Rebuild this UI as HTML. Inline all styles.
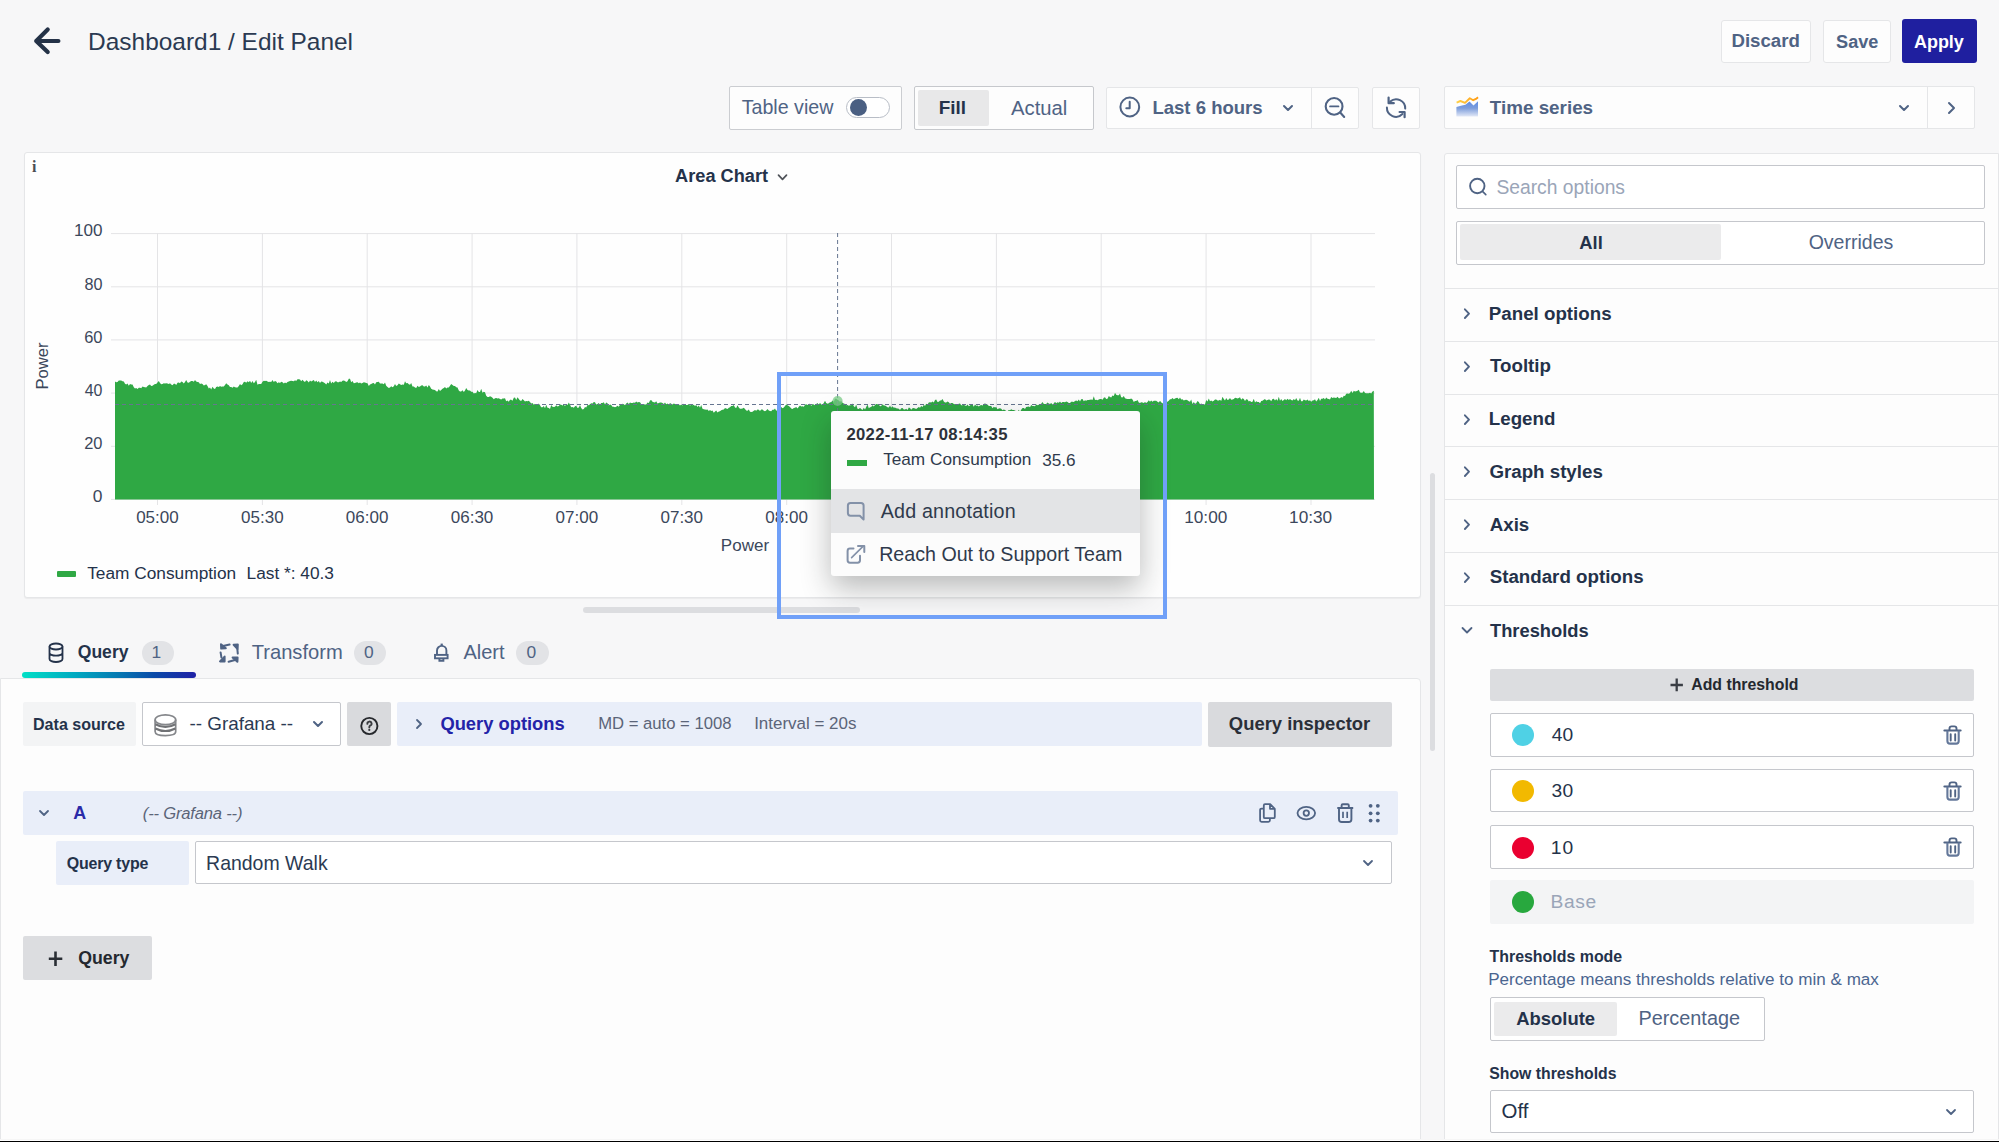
<!DOCTYPE html>
<html><head><meta charset="utf-8"><title>Edit Panel</title>
<style>
html,body{margin:0;padding:0;width:1999px;height:1142px;overflow:hidden;background:#f7f7f8;font-family:"Liberation Sans",sans-serif}
</style></head><body>
<svg style="position:absolute;left:30px;top:24px;" width="36" height="36" viewBox="0 0 36 36"><path d="M6.2 17 H28.4 M17.7 5.6 L6.2 17 L17.7 28" fill="none" stroke="#243247" stroke-width="4.2" stroke-linecap="round" stroke-linejoin="round"/></svg>
<div style="position:absolute;left:88.09px;top:30.22px;font:normal 400 24.45px/24.45px 'Liberation Sans';letter-spacing:0.000px;color:#2b3a52;white-space:pre">Dashboard1 / Edit Panel</div>
<div style="position:absolute;left:1720.5px;top:19.5px;width:90.0px;height:43.0px;box-sizing:border-box;background:#fdfdfd;border:1px solid #e5e6e8;border-radius:3px"></div>
<div style="position:absolute;left:1731.43px;top:32.24px;font:normal 700 18.66px/18.66px 'Liberation Sans';letter-spacing:0.000px;color:#4f6384;white-space:pre">Discard</div>
<div style="position:absolute;left:1823px;top:19.5px;width:67.5px;height:43.0px;box-sizing:border-box;background:#fdfdfd;border:1px solid #e5e6e8;border-radius:3px"></div>
<div style="position:absolute;left:1836.12px;top:32.69px;font:normal 700 18.13px/18.13px 'Liberation Sans';letter-spacing:0.000px;color:#4f6384;white-space:pre">Save</div>
<div style="position:absolute;left:1901.5px;top:19px;width:75.0px;height:44px;box-sizing:border-box;background:#1f1f9f;border-radius:3px"></div>
<div style="position:absolute;left:1913.92px;top:32.81px;font:normal 700 17.99px/17.99px 'Liberation Sans';letter-spacing:0.000px;color:#ffffff;white-space:pre">Apply</div>
<div style="position:absolute;left:729px;top:86.3px;width:173px;height:43.7px;box-sizing:border-box;background:#fdfdfd;border:1px solid #cbcdd1;border-radius:2px"></div>
<div style="position:absolute;left:741.69px;top:98.09px;font:normal 400 19.65px/19.65px 'Liberation Sans';letter-spacing:0.000px;color:#4f6384;white-space:pre">Table view</div>
<div style="position:absolute;left:845.5px;top:96.7px;width:44.5px;height:21.599999999999994px;box-sizing:border-box;background:#fff;border:1.5px solid #b8bdc6;border-radius:11px"></div>
<div style="position:absolute;left:849.5px;top:99px;width:17px;height:17px;border-radius:50%;background:#4a5f82"></div>
<div style="position:absolute;left:914px;top:86.3px;width:179.5999999999999px;height:43.7px;box-sizing:border-box;background:#fdfdfd;border:1px solid #c6c8cc;border-radius:2px"></div>
<div style="position:absolute;left:917.7px;top:89.9px;width:70.89999999999998px;height:35.69999999999999px;box-sizing:border-box;background:#e8e8e9;border-radius:2px"></div>
<div style="position:absolute;left:938.82px;top:98.74px;font:normal 700 18.90px/18.90px 'Liberation Sans';letter-spacing:-0.000px;color:#24324a;white-space:pre">Fill</div>
<div style="position:absolute;left:1011.00px;top:97.57px;font:normal 400 20.27px/20.27px 'Liberation Sans';letter-spacing:0.000px;color:#4f6384;white-space:pre">Actual</div>
<div style="position:absolute;left:1105.6px;top:86.8px;width:253.80000000000018px;height:42.500000000000014px;box-sizing:border-box;background:#fdfdfd;border:1px solid #e5e6e8;border-radius:2px"></div>
<div style="position:absolute;left:1310.5px;top:86.8px;width:1.0px;height:42.500000000000014px;box-sizing:border-box;background:#e5e6e8"></div>
<svg style="position:absolute;left:1117px;top:94px;" width="26" height="26" viewBox="0 0 26 26"><circle cx="12.8" cy="13" r="9.4" fill="none" stroke="#4f6384" stroke-width="2"/><path d="M12.7 7.8 V14.2 H9.3" fill="none" stroke="#4f6384" stroke-width="2" stroke-linecap="round" stroke-linejoin="round"/></svg>
<div style="position:absolute;left:1152.44px;top:99.03px;font:normal 700 18.55px/18.55px 'Liberation Sans';letter-spacing:0.000px;color:#4f6384;white-space:pre">Last 6 hours</div>
<svg style="position:absolute;left:1280px;top:100px;" width="16" height="16" viewBox="0 0 16 16"><path d="M4 6 L8 10 L12 6" fill="none" stroke="#4f6384" stroke-width="2" stroke-linecap="round" stroke-linejoin="round"/></svg>
<svg style="position:absolute;left:1321px;top:93px;" width="28" height="28" viewBox="0 0 28 28"><circle cx="13.1" cy="13.4" r="8.4" fill="none" stroke="#4f6384" stroke-width="2.1"/><path d="M9 13.4 H17.5" fill="none" stroke="#4f6384" stroke-width="1.7" stroke-linecap="round"/><path d="M19.2 19.5 L23.2 24" fill="none" stroke="#4f6384" stroke-width="2.1" stroke-linecap="round"/></svg>
<div style="position:absolute;left:1372px;top:86.8px;width:48.200000000000045px;height:42.500000000000014px;box-sizing:border-box;background:#fdfdfd;border:1px solid #e5e6e8;border-radius:2px"></div>
<svg style="position:absolute;left:1382px;top:93px;" width="28" height="28" viewBox="0 0 28 28"><path d="M8.2 8.6 A9 9 0 0 1 23.2 15.6 M4.9 14.6 A9 9 0 0 0 20.4 21" fill="none" stroke="#4f6384" stroke-width="2" stroke-linecap="round"/><path d="M6.6 4.6 V10.2 H11.8 M22.6 24.2 V19 H17.6" fill="none" stroke="#4f6384" stroke-width="2.2" stroke-linecap="round" stroke-linejoin="round"/></svg>
<div style="position:absolute;left:1444.2px;top:86.1px;width:531.3px;height:43.099999999999994px;box-sizing:border-box;background:#fdfdfd;border:1px solid #e5e6e8;border-radius:2px"></div>
<div style="position:absolute;left:1926.5px;top:86.1px;width:1.0px;height:43.099999999999994px;box-sizing:border-box;background:#e5e6e8"></div>
<svg style="position:absolute;left:1456px;top:95px;" width="24" height="23" viewBox="0 0 24 23"><defs><linearGradient id="tsg" x1="0" y1="0" x2="0" y2="1"><stop offset="0" stop-color="#5f8de6"/><stop offset="0.45" stop-color="#7d9ddb"/><stop offset="1" stop-color="#e3e9f7"/></linearGradient><linearGradient id="tso" x1="0" y1="0" x2="1" y2="0"><stop offset="0" stop-color="#ffd24a"/><stop offset="1" stop-color="#ff9a10"/></linearGradient></defs><path d="M0.4 12 L4 11 L6 10.5 L9.4 9.8 L13.5 6.6 L17.5 10.4 L22 6.2 V21.6 H0.4 Z" fill="url(#tsg)"/><path d="M0.6 7.6 L4.4 6 L9 7.9 L13.8 3.2 L17.2 5.2 L20.5 3.6 L22 2.2" fill="none" stroke="url(#tso)" stroke-width="1.9" stroke-linejoin="round"/></svg>
<div style="position:absolute;left:1489.80px;top:98.68px;font:normal 700 18.84px/18.84px 'Liberation Sans';letter-spacing:0.000px;color:#4f6384;white-space:pre">Time series</div>
<svg style="position:absolute;left:1896px;top:100px;" width="16" height="16" viewBox="0 0 16 16"><path d="M4 6 L8 10 L12 6" fill="none" stroke="#4f6384" stroke-width="2" stroke-linecap="round" stroke-linejoin="round"/></svg>
<svg style="position:absolute;left:1943px;top:99px;" width="16" height="18" viewBox="0 0 16 18"><path d="M6 4 L11 9 L6 14" fill="none" stroke="#4f6384" stroke-width="2" stroke-linecap="round" stroke-linejoin="round"/></svg>
<div style="position:absolute;left:23.5px;top:152.3px;width:1397.0px;height:445.99999999999994px;box-sizing:border-box;background:#fefefe;border:1px solid #e5e6e8;border-radius:3px;box-shadow:0 1px 1px rgba(0,0,0,0.05)"></div>
<div style="position:absolute;left:32px;top:158.5px;font:700 16px/16px 'Liberation Serif';color:#4a4d52">i</div>
<div style="position:absolute;left:675.12px;top:167.34px;font:normal 700 18.18px/18.18px 'Liberation Sans';letter-spacing:0.000px;color:#24324a;white-space:pre">Area Chart</div>
<svg style="position:absolute;left:774px;top:170px;" width="16" height="14" viewBox="0 0 16 14"><path d="M4.5 5.2 L8.5 9.4 L12.5 5.2" fill="none" stroke="#4f5359" stroke-width="1.7" stroke-linecap="round" stroke-linejoin="round"/></svg>
<svg style="position:absolute;left:0;top:0" width="1999" height="1142"><line x1="111" y1="233.6" x2="1375" y2="233.6" stroke="#e4e4e6" stroke-width="1"/><line x1="111" y1="286.8" x2="1375" y2="286.8" stroke="#e4e4e6" stroke-width="1"/><line x1="111" y1="339.9" x2="1375" y2="339.9" stroke="#e4e4e6" stroke-width="1"/><line x1="111" y1="393.1" x2="1375" y2="393.1" stroke="#e4e4e6" stroke-width="1"/><line x1="111" y1="446.3" x2="1375" y2="446.3" stroke="#e4e4e6" stroke-width="1"/><line x1="111" y1="499.4" x2="1375" y2="499.4" stroke="#e4e4e6" stroke-width="1"/><line x1="157.5" y1="233" x2="157.5" y2="505" stroke="#e4e4e6" stroke-width="1"/><line x1="262.4" y1="233" x2="262.4" y2="505" stroke="#e4e4e6" stroke-width="1"/><line x1="367.2" y1="233" x2="367.2" y2="505" stroke="#e4e4e6" stroke-width="1"/><line x1="472.1" y1="233" x2="472.1" y2="505" stroke="#e4e4e6" stroke-width="1"/><line x1="576.9" y1="233" x2="576.9" y2="505" stroke="#e4e4e6" stroke-width="1"/><line x1="681.8" y1="233" x2="681.8" y2="505" stroke="#e4e4e6" stroke-width="1"/><line x1="786.7" y1="233" x2="786.7" y2="505" stroke="#e4e4e6" stroke-width="1"/><line x1="891.5" y1="233" x2="891.5" y2="505" stroke="#e4e4e6" stroke-width="1"/><line x1="996.4" y1="233" x2="996.4" y2="505" stroke="#e4e4e6" stroke-width="1"/><line x1="1101.2" y1="233" x2="1101.2" y2="505" stroke="#e4e4e6" stroke-width="1"/><line x1="1206.1" y1="233" x2="1206.1" y2="505" stroke="#e4e4e6" stroke-width="1"/><line x1="1311.0" y1="233" x2="1311.0" y2="505" stroke="#e4e4e6" stroke-width="1"/></svg>
<div style="position:absolute;left:73.93px;top:222.18px;font:normal 400 17.08px/17.08px 'Liberation Sans';letter-spacing:0.000px;color:#3b475b;white-space:pre">100</div>
<div style="position:absolute;left:84.39px;top:276.14px;font:normal 400 16.19px/16.19px 'Liberation Sans';letter-spacing:0.000px;color:#3b475b;white-space:pre">80</div>
<div style="position:absolute;left:84.13px;top:329.03px;font:normal 400 16.43px/16.43px 'Liberation Sans';letter-spacing:0.000px;color:#3b475b;white-space:pre">60</div>
<div style="position:absolute;left:84.65px;top:382.64px;font:normal 400 15.95px/15.95px 'Liberation Sans';letter-spacing:0.000px;color:#3b475b;white-space:pre">40</div>
<div style="position:absolute;left:84.13px;top:435.43px;font:normal 400 16.43px/16.43px 'Liberation Sans';letter-spacing:0.000px;color:#3b475b;white-space:pre">20</div>
<div style="position:absolute;left:92.76px;top:487.71px;font:normal 400 17.40px/17.40px 'Liberation Sans';letter-spacing:0.000px;color:#3b475b;white-space:pre">0</div>
<div style="position:absolute;left:136.17px;top:509.35px;font:normal 400 17.01px/17.01px 'Liberation Sans';letter-spacing:0.000px;color:#3b475b;white-space:pre">05:00</div>
<div style="position:absolute;left:241.07px;top:509.35px;font:normal 400 17.01px/17.01px 'Liberation Sans';letter-spacing:0.000px;color:#3b475b;white-space:pre">05:30</div>
<div style="position:absolute;left:345.87px;top:509.35px;font:normal 400 17.01px/17.01px 'Liberation Sans';letter-spacing:0.000px;color:#3b475b;white-space:pre">06:00</div>
<div style="position:absolute;left:450.77px;top:509.35px;font:normal 400 17.01px/17.01px 'Liberation Sans';letter-spacing:0.000px;color:#3b475b;white-space:pre">06:30</div>
<div style="position:absolute;left:555.57px;top:509.35px;font:normal 400 17.01px/17.01px 'Liberation Sans';letter-spacing:0.000px;color:#3b475b;white-space:pre">07:00</div>
<div style="position:absolute;left:660.47px;top:509.35px;font:normal 400 17.01px/17.01px 'Liberation Sans';letter-spacing:0.000px;color:#3b475b;white-space:pre">07:30</div>
<div style="position:absolute;left:765.37px;top:509.35px;font:normal 400 17.01px/17.01px 'Liberation Sans';letter-spacing:0.000px;color:#3b475b;white-space:pre">08:00</div>
<div style="position:absolute;left:870.17px;top:509.35px;font:normal 400 17.01px/17.01px 'Liberation Sans';letter-spacing:0.000px;color:#3b475b;white-space:pre">08:30</div>
<div style="position:absolute;left:975.07px;top:509.35px;font:normal 400 17.01px/17.01px 'Liberation Sans';letter-spacing:0.000px;color:#3b475b;white-space:pre">09:00</div>
<div style="position:absolute;left:1079.87px;top:509.35px;font:normal 400 17.01px/17.01px 'Liberation Sans';letter-spacing:0.000px;color:#3b475b;white-space:pre">09:30</div>
<div style="position:absolute;left:1184.22px;top:509.16px;font:normal 400 17.23px/17.23px 'Liberation Sans';letter-spacing:0.000px;color:#3b475b;white-space:pre">10:00</div>
<div style="position:absolute;left:1289.12px;top:509.16px;font:normal 400 17.23px/17.23px 'Liberation Sans';letter-spacing:0.000px;color:#3b475b;white-space:pre">10:30</div>
<div style="position:absolute;left:720.87px;top:537.04px;font:normal 400 17.01px/17.01px 'Liberation Sans';letter-spacing:0.000px;color:#3b475b;white-space:pre">Power</div>
<div style="position:absolute;left:17px;top:357px;width:50px;height:18px;transform:rotate(-90deg);font:400 16.5px/18px 'Liberation Sans';color:#3b475b;text-align:center">Power</div>
<svg style="position:absolute;left:0;top:0" width="1999" height="1142"><path d="M115 499.5 L115.0 381.5 L116.2 382.3 L117.5 381.9 L118.8 380.6 L120.0 380.5 L121.2 380.5 L122.5 381.3 L123.8 381.4 L125.0 383.8 L126.2 384.6 L127.5 383.6 L128.8 385.7 L130.0 384.0 L131.2 384.6 L132.5 384.5 L133.8 387.2 L135.0 388.6 L136.2 387.9 L137.5 389.1 L138.8 387.8 L140.0 387.8 L141.2 388.3 L142.5 386.5 L143.8 387.0 L145.0 387.2 L146.2 387.6 L147.5 385.9 L148.8 384.9 L150.0 384.4 L151.2 386.0 L152.5 385.8 L153.8 384.8 L155.0 383.9 L156.2 384.0 L157.5 382.5 L158.8 380.9 L160.0 383.1 L161.2 384.3 L162.5 383.9 L163.8 383.2 L165.0 383.5 L166.2 383.3 L167.5 383.4 L168.8 384.1 L170.0 383.3 L171.2 384.5 L172.5 385.2 L173.8 383.8 L175.0 383.8 L176.2 385.1 L177.5 382.8 L178.8 382.6 L180.0 383.3 L181.2 381.5 L182.5 382.1 L183.8 383.4 L185.0 381.9 L186.2 379.9 L187.5 382.6 L188.8 382.7 L190.0 381.7 L191.2 381.1 L192.5 381.1 L193.8 381.7 L195.0 380.0 L196.2 381.5 L197.5 382.0 L198.8 382.2 L200.0 384.0 L201.2 383.4 L202.5 384.0 L203.8 385.5 L205.0 384.9 L206.2 384.3 L207.5 386.1 L208.8 388.5 L210.0 387.5 L211.2 389.4 L212.5 386.8 L213.8 388.6 L215.0 389.0 L216.2 387.0 L217.5 386.4 L218.8 386.9 L220.0 385.9 L221.2 386.8 L222.5 386.6 L223.8 386.6 L225.0 385.1 L226.2 383.3 L227.5 384.6 L228.8 385.3 L230.0 387.1 L231.2 387.1 L232.5 387.7 L233.8 386.6 L235.0 387.2 L236.2 387.5 L237.5 387.4 L238.8 386.1 L240.0 383.9 L241.2 385.3 L242.5 384.2 L243.8 382.0 L245.0 381.7 L246.2 382.7 L247.5 381.3 L248.8 382.3 L250.0 380.8 L251.2 382.9 L252.5 381.0 L253.8 383.2 L255.0 382.0 L256.2 379.8 L257.5 384.7 L258.8 384.1 L260.0 384.0 L261.2 384.1 L262.5 381.7 L263.8 380.8 L265.0 381.0 L266.2 380.7 L267.5 381.4 L268.8 382.1 L270.0 381.8 L271.2 382.1 L272.5 380.0 L273.8 382.1 L275.0 381.1 L276.2 381.6 L277.5 383.2 L278.8 382.2 L280.0 382.9 L281.2 381.8 L282.5 382.3 L283.8 383.5 L285.0 382.6 L286.2 383.2 L287.5 382.0 L288.8 381.5 L290.0 381.0 L291.2 380.7 L292.5 380.9 L293.8 381.2 L295.0 380.2 L296.2 381.1 L297.5 379.3 L298.8 379.3 L300.0 379.4 L301.2 381.3 L302.5 379.8 L303.8 381.2 L305.0 381.9 L306.2 380.3 L307.5 380.9 L308.8 382.5 L310.0 380.5 L311.2 381.5 L312.5 380.8 L313.8 380.0 L315.0 381.9 L316.2 380.6 L317.5 382.3 L318.8 381.0 L320.0 383.1 L321.2 381.6 L322.5 381.7 L323.8 382.6 L325.0 383.2 L326.2 384.4 L327.5 382.5 L328.8 383.5 L330.0 379.9 L331.2 383.5 L332.5 381.7 L333.8 383.1 L335.0 381.5 L336.2 381.3 L337.5 382.2 L338.8 382.3 L340.0 381.4 L341.2 381.9 L342.5 380.7 L343.8 380.4 L345.0 380.9 L346.2 382.0 L347.5 381.3 L348.8 378.8 L350.0 378.7 L351.2 382.3 L352.5 381.1 L353.8 383.2 L355.0 383.0 L356.2 382.4 L357.5 382.2 L358.8 383.2 L360.0 382.4 L361.2 383.5 L362.5 382.9 L363.8 382.2 L365.0 382.4 L366.2 383.1 L367.5 383.2 L368.8 385.9 L370.0 384.4 L371.2 384.0 L372.5 383.2 L373.8 383.1 L375.0 384.5 L376.2 382.2 L377.5 382.1 L378.8 381.8 L380.0 383.6 L381.2 383.4 L382.5 383.4 L383.8 384.2 L385.0 382.4 L386.2 385.8 L387.5 387.1 L388.8 387.9 L390.0 387.4 L391.2 386.2 L392.5 387.3 L393.8 386.3 L395.0 384.1 L396.2 386.0 L397.5 385.2 L398.8 383.4 L400.0 384.3 L401.2 385.1 L402.5 384.5 L403.8 384.7 L405.0 381.3 L406.2 383.2 L407.5 383.0 L408.8 384.2 L410.0 384.7 L411.2 382.9 L412.5 386.5 L413.8 386.5 L415.0 387.6 L416.2 388.0 L417.5 385.8 L418.8 387.1 L420.0 386.6 L421.2 385.5 L422.5 385.3 L423.8 386.4 L425.0 386.4 L426.2 385.5 L427.5 387.4 L428.8 385.1 L430.0 386.4 L431.2 388.7 L432.5 389.4 L433.8 389.7 L435.0 390.1 L436.2 391.2 L437.5 391.4 L438.8 388.9 L440.0 391.0 L441.2 390.0 L442.5 388.7 L443.8 388.0 L445.0 387.1 L446.2 388.5 L447.5 387.4 L448.8 387.5 L450.0 385.7 L451.2 384.1 L452.5 385.0 L453.8 386.1 L455.0 386.0 L456.2 387.3 L457.5 387.4 L458.8 390.5 L460.0 391.4 L461.2 391.4 L462.5 390.2 L463.8 391.9 L465.0 390.4 L466.2 388.1 L467.5 390.0 L468.8 390.6 L470.0 390.6 L471.2 391.7 L472.5 391.8 L473.8 393.5 L475.0 393.1 L476.2 393.3 L477.5 389.9 L478.8 392.0 L480.0 392.1 L481.2 388.8 L482.5 392.8 L483.8 391.7 L485.0 392.2 L486.2 395.8 L487.5 396.9 L488.8 397.0 L490.0 396.3 L491.2 396.8 L492.5 397.8 L493.8 399.2 L495.0 398.3 L496.2 398.0 L497.5 398.6 L498.8 398.2 L500.0 399.0 L501.2 399.5 L502.5 398.5 L503.8 398.5 L505.0 398.2 L506.2 401.2 L507.5 400.6 L508.8 401.8 L510.0 399.8 L511.2 399.7 L512.5 400.7 L513.8 397.8 L515.0 397.5 L516.2 400.0 L517.5 397.2 L518.8 399.1 L520.0 400.4 L521.2 401.0 L522.5 399.0 L523.8 400.3 L525.0 401.6 L526.2 401.1 L527.5 401.2 L528.8 400.8 L530.0 401.9 L531.2 403.6 L532.5 402.9 L533.8 404.8 L535.0 403.8 L536.2 405.1 L537.5 405.0 L538.8 403.6 L540.0 405.3 L541.2 407.2 L542.5 407.3 L543.8 406.0 L545.0 408.3 L546.2 404.8 L547.5 407.8 L548.8 408.0 L550.0 409.0 L551.2 405.0 L552.5 406.8 L553.8 407.1 L555.0 406.7 L556.2 405.2 L557.5 406.4 L558.8 406.0 L560.0 404.5 L561.2 404.8 L562.5 405.4 L563.8 404.7 L565.0 405.9 L566.2 404.6 L567.5 404.9 L568.8 402.5 L570.0 404.7 L571.2 407.2 L572.5 407.0 L573.8 407.8 L575.0 406.2 L576.2 405.7 L577.5 408.0 L578.8 407.5 L580.0 405.1 L581.2 407.9 L582.5 409.6 L583.8 409.0 L585.0 406.9 L586.2 407.5 L587.5 404.9 L588.8 405.2 L590.0 404.2 L591.2 403.3 L592.5 403.6 L593.8 402.0 L595.0 402.3 L596.2 404.6 L597.5 404.1 L598.8 403.1 L600.0 404.7 L601.2 402.9 L602.5 403.0 L603.8 402.2 L605.0 404.6 L606.2 402.5 L607.5 403.3 L608.8 405.6 L610.0 404.5 L611.2 405.0 L612.5 406.8 L613.8 406.8 L615.0 407.3 L616.2 406.8 L617.5 405.8 L618.8 406.7 L620.0 404.8 L621.2 404.6 L622.5 403.8 L623.8 404.2 L625.0 405.3 L626.2 403.4 L627.5 402.6 L628.8 403.9 L630.0 402.4 L631.2 403.1 L632.5 403.1 L633.8 402.5 L635.0 402.7 L636.2 401.6 L637.5 402.5 L638.8 401.9 L640.0 402.2 L641.2 403.9 L642.5 404.1 L643.8 404.3 L645.0 404.6 L646.2 404.5 L647.5 402.6 L648.8 403.1 L650.0 400.5 L651.2 400.1 L652.5 401.8 L653.8 402.2 L655.0 402.5 L656.2 401.3 L657.5 403.6 L658.8 403.1 L660.0 402.6 L661.2 402.6 L662.5 403.0 L663.8 404.1 L665.0 402.5 L666.2 404.3 L667.5 403.4 L668.8 404.7 L670.0 402.9 L671.2 403.8 L672.5 404.5 L673.8 403.4 L675.0 404.1 L676.2 403.9 L677.5 404.0 L678.8 404.2 L680.0 405.6 L681.2 404.4 L682.5 405.4 L683.8 403.7 L685.0 404.8 L686.2 404.9 L687.5 405.1 L688.8 404.1 L690.0 405.8 L691.2 404.5 L692.5 405.3 L693.8 404.8 L695.0 405.9 L696.2 405.0 L697.5 406.9 L698.8 405.4 L700.0 407.8 L701.2 404.9 L702.5 408.7 L703.8 409.2 L705.0 409.4 L706.2 409.8 L707.5 409.4 L708.8 411.0 L710.0 409.9 L711.2 411.1 L712.5 410.6 L713.8 412.7 L715.0 411.4 L716.2 410.6 L717.5 412.6 L718.8 411.5 L720.0 411.2 L721.2 410.2 L722.5 409.8 L723.8 409.4 L725.0 407.9 L726.2 408.6 L727.5 408.9 L728.8 407.7 L730.0 407.3 L731.2 406.1 L732.5 406.0 L733.8 405.0 L735.0 407.6 L736.2 408.0 L737.5 405.3 L738.8 407.6 L740.0 408.8 L741.2 408.7 L742.5 408.6 L743.8 407.7 L745.0 409.0 L746.2 410.6 L747.5 410.7 L748.8 409.4 L750.0 411.7 L751.2 412.0 L752.5 411.7 L753.8 410.8 L755.0 410.0 L756.2 410.7 L757.5 409.4 L758.8 409.7 L760.0 411.0 L761.2 409.6 L762.5 409.4 L763.8 410.7 L765.0 411.2 L766.2 410.4 L767.5 409.1 L768.8 410.5 L770.0 410.9 L771.2 411.3 L772.5 409.7 L773.8 409.8 L775.0 408.4 L776.2 410.8 L777.5 410.1 L778.8 409.5 L780.0 406.1 L781.2 407.1 L782.5 408.2 L783.8 407.4 L785.0 405.9 L786.2 404.6 L787.5 405.2 L788.8 406.0 L790.0 406.9 L791.2 408.4 L792.5 409.0 L793.8 407.9 L795.0 407.7 L796.2 406.9 L797.5 408.5 L798.8 406.8 L800.0 405.4 L801.2 406.4 L802.5 406.2 L803.8 406.7 L805.0 404.8 L806.2 404.2 L807.5 405.0 L808.8 404.0 L810.0 403.7 L811.2 406.0 L812.5 403.9 L813.8 404.6 L815.0 405.3 L816.2 403.9 L817.5 403.1 L818.8 404.8 L820.0 402.7 L821.2 404.6 L822.5 404.5 L823.8 403.0 L825.0 400.7 L826.2 403.1 L827.5 403.7 L828.8 403.2 L830.0 402.3 L831.2 402.3 L832.5 400.4 L833.8 401.7 L835.0 398.7 L836.2 398.8 L837.5 399.8 L838.8 400.6 L840.0 401.8 L841.2 400.9 L842.5 402.7 L843.8 403.6 L845.0 403.9 L846.2 405.2 L847.5 404.9 L848.8 405.7 L850.0 405.2 L851.2 405.3 L852.5 403.6 L853.8 406.2 L855.0 407.2 L856.2 404.5 L857.5 408.8 L858.8 409.1 L860.0 407.8 L861.2 408.9 L862.5 410.1 L863.8 407.7 L865.0 409.6 L866.2 407.1 L867.5 404.5 L868.8 408.3 L870.0 407.3 L871.2 407.0 L872.5 405.2 L873.8 406.5 L875.0 405.0 L876.2 403.9 L877.5 404.2 L878.8 404.4 L880.0 406.2 L881.2 406.1 L882.5 404.2 L883.8 405.5 L885.0 405.5 L886.2 406.2 L887.5 407.3 L888.8 407.4 L890.0 405.5 L891.2 407.8 L892.5 406.2 L893.8 407.8 L895.0 407.4 L896.2 408.2 L897.5 408.4 L898.8 408.8 L900.0 409.9 L901.2 408.3 L902.5 408.1 L903.8 409.6 L905.0 409.4 L906.2 408.7 L907.5 409.9 L908.8 407.6 L910.0 408.0 L911.2 409.7 L912.5 408.3 L913.8 407.9 L915.0 408.6 L916.2 409.1 L917.5 407.9 L918.8 407.1 L920.0 407.8 L921.2 405.9 L922.5 406.9 L923.8 404.7 L925.0 406.1 L926.2 403.7 L927.5 404.5 L928.8 402.6 L930.0 402.3 L931.2 402.5 L932.5 401.5 L933.8 402.6 L935.0 399.9 L936.2 399.6 L937.5 402.1 L938.8 401.7 L940.0 400.4 L941.2 400.4 L942.5 399.1 L943.8 401.5 L945.0 402.5 L946.2 402.5 L947.5 401.4 L948.8 402.3 L950.0 403.8 L951.2 403.1 L952.5 403.0 L953.8 403.9 L955.0 404.3 L956.2 404.7 L957.5 404.4 L958.8 403.7 L960.0 403.4 L961.2 405.3 L962.5 405.2 L963.8 404.8 L965.0 405.6 L966.2 405.9 L967.5 404.6 L968.8 406.2 L970.0 405.4 L971.2 404.3 L972.5 404.6 L973.8 406.7 L975.0 404.5 L976.2 405.7 L977.5 405.6 L978.8 406.4 L980.0 405.4 L981.2 404.9 L982.5 405.4 L983.8 404.7 L985.0 403.1 L986.2 405.1 L987.5 404.6 L988.8 406.0 L990.0 406.1 L991.2 406.1 L992.5 408.3 L993.8 406.7 L995.0 407.5 L996.2 407.1 L997.5 409.2 L998.8 408.5 L1000.0 408.2 L1001.2 408.8 L1002.5 410.3 L1003.8 409.6 L1005.0 410.1 L1006.2 411.1 L1007.5 411.2 L1008.8 410.0 L1010.0 410.2 L1011.2 409.2 L1012.5 410.0 L1013.8 410.1 L1015.0 410.5 L1016.2 411.2 L1017.5 411.9 L1018.8 409.8 L1020.0 412.0 L1021.2 409.7 L1022.5 408.1 L1023.8 408.1 L1025.0 409.1 L1026.2 407.1 L1027.5 406.8 L1028.8 406.4 L1030.0 407.3 L1031.2 405.1 L1032.5 406.1 L1033.8 406.1 L1035.0 406.2 L1036.2 404.5 L1037.5 405.2 L1038.8 404.7 L1040.0 404.8 L1041.2 403.8 L1042.5 402.1 L1043.8 404.1 L1045.0 403.9 L1046.2 403.9 L1047.5 402.4 L1048.8 403.5 L1050.0 403.9 L1051.2 403.0 L1052.5 404.4 L1053.8 403.5 L1055.0 401.8 L1056.2 403.3 L1057.5 402.3 L1058.8 402.7 L1060.0 401.4 L1061.2 403.0 L1062.5 401.9 L1063.8 401.9 L1065.0 402.2 L1066.2 401.4 L1067.5 401.9 L1068.8 402.9 L1070.0 402.9 L1071.2 401.8 L1072.5 401.7 L1073.8 401.9 L1075.0 400.9 L1076.2 400.6 L1077.5 401.3 L1078.8 399.6 L1080.0 401.6 L1081.2 399.3 L1082.5 399.0 L1083.8 401.2 L1085.0 400.3 L1086.2 400.8 L1087.5 399.9 L1088.8 399.9 L1090.0 399.7 L1091.2 399.6 L1092.5 399.9 L1093.8 396.2 L1095.0 400.0 L1096.2 399.7 L1097.5 400.2 L1098.8 399.6 L1100.0 399.0 L1101.2 399.1 L1102.5 399.8 L1103.8 397.8 L1105.0 397.3 L1106.2 398.9 L1107.5 398.7 L1108.8 395.9 L1110.0 397.0 L1111.2 397.5 L1112.5 395.6 L1113.8 396.1 L1115.0 392.7 L1116.2 394.7 L1117.5 395.2 L1118.8 395.3 L1120.0 393.4 L1121.2 397.3 L1122.5 397.5 L1123.8 396.1 L1125.0 398.3 L1126.2 398.8 L1127.5 399.0 L1128.8 399.1 L1130.0 399.0 L1131.2 398.5 L1132.5 399.4 L1133.8 401.9 L1135.0 401.0 L1136.2 401.1 L1137.5 400.1 L1138.8 402.4 L1140.0 403.0 L1141.2 402.2 L1142.5 402.5 L1143.8 402.9 L1145.0 402.0 L1146.2 403.1 L1147.5 401.9 L1148.8 400.3 L1150.0 401.7 L1151.2 400.4 L1152.5 401.8 L1153.8 400.8 L1155.0 400.7 L1156.2 400.8 L1157.5 401.7 L1158.8 402.6 L1160.0 400.8 L1161.2 402.2 L1162.5 403.5 L1163.8 401.2 L1165.0 402.7 L1166.2 401.5 L1167.5 401.7 L1168.8 400.7 L1170.0 399.3 L1171.2 399.3 L1172.5 397.9 L1173.8 399.2 L1175.0 398.4 L1176.2 398.1 L1177.5 397.7 L1178.8 399.2 L1180.0 397.5 L1181.2 399.4 L1182.5 399.2 L1183.8 400.5 L1185.0 400.0 L1186.2 399.7 L1187.5 400.2 L1188.8 401.2 L1190.0 401.8 L1191.2 399.5 L1192.5 404.1 L1193.8 401.9 L1195.0 403.8 L1196.2 403.3 L1197.5 401.0 L1198.8 402.0 L1200.0 404.3 L1201.2 403.6 L1202.5 404.2 L1203.8 404.7 L1205.0 404.2 L1206.2 400.0 L1207.5 401.5 L1208.8 398.4 L1210.0 401.3 L1211.2 400.6 L1212.5 401.6 L1213.8 400.7 L1215.0 399.4 L1216.2 399.6 L1217.5 400.5 L1218.8 400.5 L1220.0 399.8 L1221.2 401.1 L1222.5 396.8 L1223.8 399.0 L1225.0 400.6 L1226.2 398.1 L1227.5 400.1 L1228.8 399.6 L1230.0 398.0 L1231.2 399.7 L1232.5 399.4 L1233.8 399.1 L1235.0 397.7 L1236.2 398.0 L1237.5 398.5 L1238.8 398.0 L1240.0 397.2 L1241.2 399.7 L1242.5 398.2 L1243.8 399.0 L1245.0 400.9 L1246.2 399.3 L1247.5 399.4 L1248.8 401.6 L1250.0 400.8 L1251.2 402.1 L1252.5 401.8 L1253.8 398.8 L1255.0 402.6 L1256.2 401.3 L1257.5 401.9 L1258.8 401.9 L1260.0 403.2 L1261.2 400.9 L1262.5 400.8 L1263.8 399.8 L1265.0 399.1 L1266.2 400.5 L1267.5 400.0 L1268.8 399.4 L1270.0 399.7 L1271.2 401.3 L1272.5 398.9 L1273.8 398.8 L1275.0 400.5 L1276.2 399.0 L1277.5 400.7 L1278.8 396.8 L1280.0 400.7 L1281.2 399.0 L1282.5 400.9 L1283.8 400.0 L1285.0 399.0 L1286.2 400.3 L1287.5 398.7 L1288.8 400.0 L1290.0 399.1 L1291.2 400.0 L1292.5 400.5 L1293.8 398.9 L1295.0 400.2 L1296.2 398.0 L1297.5 400.4 L1298.8 400.7 L1300.0 397.7 L1301.2 401.2 L1302.5 401.2 L1303.8 399.6 L1305.0 400.2 L1306.2 400.4 L1307.5 399.6 L1308.8 400.9 L1310.0 400.2 L1311.2 401.8 L1312.5 400.4 L1313.8 400.3 L1315.0 399.3 L1316.2 401.4 L1317.5 400.1 L1318.8 397.8 L1320.0 400.9 L1321.2 398.7 L1322.5 398.7 L1323.8 397.9 L1325.0 399.5 L1326.2 397.5 L1327.5 398.8 L1328.8 399.1 L1330.0 399.4 L1331.2 397.1 L1332.5 398.1 L1333.8 397.5 L1335.0 397.7 L1336.2 398.0 L1337.5 396.7 L1338.8 398.2 L1340.0 398.2 L1341.2 397.0 L1342.5 397.8 L1343.8 395.8 L1345.0 396.0 L1346.2 393.8 L1347.5 393.5 L1348.8 393.7 L1350.0 392.9 L1351.2 390.7 L1352.5 392.9 L1353.8 390.8 L1355.0 391.6 L1356.2 391.2 L1357.5 390.7 L1358.8 389.7 L1360.0 392.5 L1361.2 392.7 L1362.5 392.7 L1363.8 391.0 L1365.0 392.9 L1366.2 393.3 L1367.5 393.3 L1368.8 393.2 L1370.0 392.7 L1371.2 393.5 L1372.5 391.5 L1373.8 390.7 L1374 499.5 Z" fill="#2fa844"/><line x1="115" y1="404.5" x2="1374" y2="404.5" stroke="#667590" stroke-width="1" stroke-dasharray="4 3"/><line x1="837.6" y1="233" x2="837.6" y2="499" stroke="#667590" stroke-width="1" stroke-dasharray="4 3"/><circle cx="837.6" cy="401" r="5" fill="#7acc86" opacity="0.75"/></svg>
<div style="position:absolute;left:57.3px;top:570.5px;width:18.700000000000003px;height:6.5px;box-sizing:border-box;background:#2fa844;border-radius:1px"></div>
<div style="position:absolute;left:87.23px;top:564.90px;font:normal 400 17.30px/17.30px 'Liberation Sans';letter-spacing:0.000px;color:#24324a;white-space:pre">Team Consumption</div>
<div style="position:absolute;left:246.55px;top:564.91px;font:normal 400 17.29px/17.29px 'Liberation Sans';letter-spacing:0.000px;color:#24324a;white-space:pre">Last *: 40.3</div>
<div style="position:absolute;left:583px;top:607px;width:277px;height:5.5px;box-sizing:border-box;background:#dcdde0;border-radius:3px"></div>
<div style="position:absolute;left:830.5px;top:411.3px;width:309px;height:165px;background:#fcfcfc;border-radius:3px;box-shadow:0 12px 30px rgba(24,26,27,0.30)"></div>
<div style="position:absolute;left:830.5px;top:489.2px;width:309.0999999999999px;height:43.69999999999999px;box-sizing:border-box;background:#e3e4e6"></div>
<div style="position:absolute;left:846.48px;top:426.84px;font:normal 700 16.66px/16.66px 'Liberation Sans';letter-spacing:0.297px;color:#2d3139;white-space:pre">2022-11-17 08:14:35</div>
<div style="position:absolute;left:847px;top:459.5px;width:20px;height:6.300000000000011px;box-sizing:border-box;background:#2fa844"></div>
<div style="position:absolute;left:883.13px;top:451.46px;font:normal 400 17.22px/17.22px 'Liberation Sans';letter-spacing:0.000px;color:#2f3a4c;white-space:pre">Team Consumption</div>
<div style="position:absolute;left:1042.26px;top:451.50px;font:normal 400 17.18px/17.18px 'Liberation Sans';letter-spacing:0.000px;color:#2f3a4c;white-space:pre">35.6</div>
<svg style="position:absolute;left:843px;top:500px;" width="24" height="24" viewBox="0 0 24 24"><path d="M7.5 2.9 H18 Q20.6 2.9 20.6 5.5 V19.6 L16.8 15.7 H7.5 Q4.9 15.7 4.9 13.1 V5.5 Q4.9 2.9 7.5 2.9 Z" fill="none" stroke="#8391a8" stroke-width="2" stroke-linejoin="round"/></svg>
<div style="position:absolute;left:880.70px;top:502.27px;font:normal 400 19.69px/19.69px 'Liberation Sans';letter-spacing:0.189px;color:#2f3a4c;white-space:pre">Add annotation</div>
<svg style="position:absolute;left:843px;top:543px;" width="24" height="24" viewBox="0 0 24 24"><path d="M10.5 5.6 H7 Q4.6 5.6 4.6 8 V17.3 Q4.6 19.7 7 19.7 H14.6 Q17 19.7 17 17.3 V12.8" fill="none" stroke="#8391a8" stroke-width="2" stroke-linecap="round" stroke-linejoin="round"/><path d="M8.6 14.6 L20 3.4" fill="none" stroke="#8391a8" stroke-width="1.6" stroke-linecap="round"/><path d="M15 3 H21.3 V9" fill="none" stroke="#8391a8" stroke-width="2" stroke-linecap="round" stroke-linejoin="round"/></svg>
<div style="position:absolute;left:879.16px;top:545.30px;font:normal 400 19.65px/19.65px 'Liberation Sans';letter-spacing:0.000px;color:#2f3a4c;white-space:pre">Reach Out to Support Team</div>
<div style="position:absolute;left:777.2px;top:372px;width:389.79999999999995px;height:246.5px;box-sizing:border-box;border:4.2px solid #70a0f8"></div>
<svg style="position:absolute;left:44px;top:640px;" width="24" height="26" viewBox="0 0 24 26"><ellipse cx="12" cy="6.5" rx="6.5" ry="3" fill="none" stroke="#24324a" stroke-width="1.8"/><path d="M5.5 6.5 V19 A6.5 3 0 0 0 18.5 19 V6.5 M5.5 12.7 A6.5 3 0 0 0 18.5 12.7" fill="none" stroke="#24324a" stroke-width="1.8"/></svg>
<div style="position:absolute;left:77.75px;top:643.88px;font:normal 700 17.56px/17.56px 'Liberation Sans';letter-spacing:0.000px;color:#24324a;white-space:pre">Query</div>
<div style="position:absolute;left:141.5px;top:640.7px;width:32.19999999999999px;height:24.699999999999932px;box-sizing:border-box;background:#e2e3e6;border-radius:13px"></div>
<div style="position:absolute;left:151.41px;top:643.70px;font:normal 400 17.41px/17.41px 'Liberation Sans';letter-spacing:0.000px;color:#4f6384;white-space:pre">1</div>
<div style="position:absolute;left:22.4px;top:672.3px;width:173.29999999999998px;height:5.7000000000000455px;box-sizing:border-box;background:linear-gradient(90deg,#02dfc6 0%,#00aac1 30%,#0679b2 55%,#0a4aa8 76%,#2020a6 100%);border-radius:3px"></div>
<svg style="position:absolute;left:214px;top:638px;" width="30" height="30" viewBox="0 0 30 30"><g fill="#4f6384" stroke="#4f6384" stroke-width="2" stroke-linejoin="round" stroke-linecap="round"><path d="M15.6 6.6 L9 8" fill="none"/><path d="M7 6.2 L7.2 10.6 L11.8 10.3 Z"/><path d="M23.4 11.6 L23.8 15.6" fill="none"/><path d="M19.6 6.8 L23.8 6.6 L23.6 11 Z"/><path d="M14.6 23.8 L21 22" fill="none"/><path d="M18.6 19.4 L23.6 19.4 L23.4 23.8 Z"/><path d="M6.6 14.4 L7.4 19.4" fill="none"/><path d="M6 23.4 L10.6 23.4 L10.6 18.6 Z"/></g></svg>
<div style="position:absolute;left:251.68px;top:641.65px;font:normal 400 20.17px/20.17px 'Liberation Sans';letter-spacing:0.000px;color:#4f6384;white-space:pre">Transform</div>
<div style="position:absolute;left:354px;top:640.7px;width:31.600000000000023px;height:24.699999999999932px;box-sizing:border-box;background:#e2e3e6;border-radius:13px"></div>
<div style="position:absolute;left:363.96px;top:643.70px;font:normal 400 17.41px/17.41px 'Liberation Sans';letter-spacing:0.000px;color:#4f6384;white-space:pre">0</div>
<svg style="position:absolute;left:426px;top:638px;" width="30" height="30" viewBox="0 0 30 30"><path d="M11 16.8 V12.6 A4.7 4.7 0 0 1 20.4 12.6 V16.8" fill="none" stroke="#4f6384" stroke-width="1.9"/><rect x="9" y="16.9" width="12.6" height="3.4" fill="none" stroke="#4f6384" stroke-width="1.9"/><path d="M13.4 20.6 V22.8 H17.4 V20.6" fill="none" stroke="#4f6384" stroke-width="1.9"/><rect x="14.6" y="5.6" width="2.2" height="2.4" fill="#4f6384"/></svg>
<div style="position:absolute;left:463.40px;top:641.76px;font:normal 400 20.05px/20.05px 'Liberation Sans';letter-spacing:0.000px;color:#4f6384;white-space:pre">Alert</div>
<div style="position:absolute;left:516px;top:640.7px;width:32.700000000000045px;height:24.699999999999932px;box-sizing:border-box;background:#e2e3e6;border-radius:13px"></div>
<div style="position:absolute;left:526.46px;top:643.70px;font:normal 400 17.41px/17.41px 'Liberation Sans';letter-spacing:0.000px;color:#4f6384;white-space:pre">0</div>
<div style="position:absolute;left:0px;top:678px;width:1420.5px;height:472px;box-sizing:border-box;background:#fdfdfd;border:1px solid #e5e6e8;border-top-right-radius:4px"></div>
<div style="position:absolute;left:22.6px;top:702px;width:113.4px;height:44.39999999999998px;box-sizing:border-box;background:#f3f4f5;border-radius:2px"></div>
<div style="position:absolute;left:33.00px;top:716.34px;font:normal 700 16.07px/16.07px 'Liberation Sans';letter-spacing:-0.000px;color:#24324a;white-space:pre">Data source</div>
<div style="position:absolute;left:142px;top:702.4px;width:199px;height:43.60000000000002px;box-sizing:border-box;background:#fff;border:1px solid #c5c7cc;border-radius:2px"></div>
<svg style="position:absolute;left:152px;top:712px;" width="27" height="27" viewBox="0 0 27 27"><ellipse cx="13.4" cy="7.8" rx="10.3" ry="4.9" fill="none" stroke="#85878b" stroke-width="1.7"/><path d="M3.1 7.8 V19.5 Q3.1 23.6 13.4 23.6 Q23.7 23.6 23.7 19.5 V7.8" fill="none" stroke="#85878b" stroke-width="1.7"/><path d="M3.4 12.2 Q13.4 17.6 23.4 12.2 M3.4 16.4 Q13.4 21.6 23.4 16.4" fill="none" stroke="#707275" stroke-width="2.2"/></svg>
<div style="position:absolute;left:189.41px;top:714.95px;font:normal 400 18.88px/18.88px 'Liberation Sans';letter-spacing:0.000px;color:#2b3a52;white-space:pre">-- Grafana --</div>
<svg style="position:absolute;left:310px;top:716px;" width="16" height="16" viewBox="0 0 16 16"><path d="M4 6 L8 10 L12 6" fill="none" stroke="#4f6384" stroke-width="2" stroke-linecap="round" stroke-linejoin="round"/></svg>
<div style="position:absolute;left:347.4px;top:702px;width:43.60000000000002px;height:44.39999999999998px;box-sizing:border-box;background:#d9dadd;border-radius:2px"></div>
<svg style="position:absolute;left:357px;top:713.5px;" width="24" height="24" viewBox="0 0 24 24"><circle cx="12.35" cy="12" r="8.1" fill="none" stroke="#26282c" stroke-width="1.9"/><path d="M10.4 9.9 A2.1 2.1 0 1 1 12.9 11.7 Q12.3 12.1 12.3 13.4" fill="none" stroke="#3a3c40" stroke-width="1.9" stroke-linecap="round"/><circle cx="12.3" cy="15.9" r="1.1" fill="#3a3c40"/></svg>
<div style="position:absolute;left:397px;top:702px;width:804.5px;height:44.299999999999955px;box-sizing:border-box;background:#e9eef9;border-radius:2px"></div>
<svg style="position:absolute;left:411px;top:716px;" width="16" height="16" viewBox="0 0 16 16"><path d="M6 4 L10 8 L6 12" fill="none" stroke="#4f6384" stroke-width="1.8" stroke-linecap="round" stroke-linejoin="round"/></svg>
<div style="position:absolute;left:440.43px;top:714.91px;font:normal 700 18.34px/18.34px 'Liberation Sans';letter-spacing:-0.000px;color:#2323a8;white-space:pre">Query options</div>
<div style="position:absolute;left:598.20px;top:715.83px;font:normal 400 16.67px/16.67px 'Liberation Sans';letter-spacing:0.000px;color:#5b6478;white-space:pre">MD = auto = 1008</div>
<div style="position:absolute;left:754.17px;top:715.57px;font:normal 400 16.97px/16.97px 'Liberation Sans';letter-spacing:-0.000px;color:#5b6478;white-space:pre">Interval = 20s</div>
<div style="position:absolute;left:1208px;top:702.2px;width:183.5999999999999px;height:44.39999999999998px;box-sizing:border-box;background:#d9dadd;border-radius:2px"></div>
<div style="position:absolute;left:1228.82px;top:714.82px;font:normal 700 18.44px/18.44px 'Liberation Sans';letter-spacing:0.000px;color:#2a2f38;white-space:pre">Query inspector</div>
<div style="position:absolute;left:22.8px;top:791px;width:1375.2px;height:43.799999999999955px;box-sizing:border-box;background:#e9eef9;border-radius:2px"></div>
<svg style="position:absolute;left:36px;top:805px;" width="16" height="16" viewBox="0 0 16 16"><path d="M4 6 L8 10 L12 6" fill="none" stroke="#4f6384" stroke-width="1.8" stroke-linecap="round" stroke-linejoin="round"/></svg>
<div style="position:absolute;left:73.22px;top:805.09px;font:normal 700 17.89px/17.89px 'Liberation Sans';letter-spacing:0.000px;color:#2a2aa8;white-space:pre">A</div>
<div style="position:absolute;left:142.82px;top:806.20px;font:italic 400 16.59px/16.59px 'Liberation Sans';letter-spacing:-0.189px;color:#5b6478;white-space:pre">(-- Grafana --)</div>
<svg style="position:absolute;left:1256px;top:800px;" width="24" height="24" viewBox="0 0 24 24"><path d="M7.6 8.6 H5.6 Q4.1 8.6 4.1 10.1 V20.3 Q4.1 21.8 5.6 21.8 H12.4 Q13.9 21.8 13.9 20.3 V18.3" fill="none" stroke="#4f6384" stroke-width="1.8" stroke-linejoin="round"/><path d="M9 4.2 H14.2 L18.8 8.8 V16.9 Q18.8 18.2 17.5 18.2 H9 Q7.8 18.2 7.8 16.9 V5.5 Q7.8 4.2 9 4.2 Z M14 4.6 V8.8 H18.6" fill="none" stroke="#4f6384" stroke-width="1.8" stroke-linejoin="round"/></svg>
<svg style="position:absolute;left:1294px;top:800px;" width="24" height="24" viewBox="0 0 24 24"><ellipse cx="12.3" cy="13.1" rx="8.8" ry="6.2" fill="none" stroke="#4f6384" stroke-width="1.8"/><circle cx="12.3" cy="13.1" r="2.7" fill="none" stroke="#4f6384" stroke-width="1.8"/></svg>
<svg style="position:absolute;left:1334px;top:800px;" width="24" height="24" viewBox="0 0 24 24"><path d="M3.3 8 H19.2 M7.6 8 V5.5 Q7.6 4.3 8.8 4.3 H13.6 Q14.8 4.3 14.8 5.5 V8 M5 8 V19.2 Q5 22 7.8 22 H14.6 Q17.4 22 17.4 19.2 V8" fill="none" stroke="#4f6384" stroke-width="1.9" stroke-linejoin="round"/><path d="M9 11.8 V18 M13.2 11.8 V18" fill="none" stroke="#4f6384" stroke-width="1.7"/></svg>
<svg style="position:absolute;left:1364px;top:800px;" width="22" height="24" viewBox="0 0 22 24"><g fill="#4f6384"><circle cx="6.6" cy="5.8" r="1.9"/><circle cx="13.8" cy="5.8" r="1.9"/><circle cx="6.6" cy="13.3" r="1.9"/><circle cx="13.8" cy="13.3" r="1.9"/><circle cx="6.6" cy="20.6" r="1.9"/><circle cx="13.8" cy="20.6" r="1.9"/></g></svg>
<div style="position:absolute;left:56px;top:841.3px;width:133px;height:43.700000000000045px;box-sizing:border-box;background:#e9eef9;border-radius:2px"></div>
<div style="position:absolute;left:66.70px;top:856.42px;font:normal 700 15.97px/15.97px 'Liberation Sans';letter-spacing:-0.193px;color:#24324a;white-space:pre">Query type</div>
<div style="position:absolute;left:195px;top:841px;width:1196.6px;height:43.39999999999998px;box-sizing:border-box;background:#fff;border:1px solid #c5c7cc;border-radius:2px"></div>
<div style="position:absolute;left:206.08px;top:853.74px;font:normal 400 19.48px/19.48px 'Liberation Sans';letter-spacing:0.000px;color:#2b3a52;white-space:pre">Random Walk</div>
<svg style="position:absolute;left:1360px;top:855px;" width="16" height="16" viewBox="0 0 16 16"><path d="M4 6 L8 10 L12 6" fill="none" stroke="#4f6384" stroke-width="1.8" stroke-linecap="round" stroke-linejoin="round"/></svg>
<div style="position:absolute;left:22.8px;top:936.2px;width:129.5px;height:43.39999999999998px;box-sizing:border-box;background:#dcdde0;border-radius:2px"></div>
<svg style="position:absolute;left:46px;top:950px;" width="18" height="18" viewBox="0 0 18 18"><path d="M9.5 1.6 V16 M2.8 8.8 H16.3" fill="none" stroke="#2a2e35" stroke-width="2.6"/></svg>
<div style="position:absolute;left:78.25px;top:949.93px;font:normal 700 17.73px/17.73px 'Liberation Sans';letter-spacing:0.000px;color:#24282f;white-space:pre">Query</div>
<div style="position:absolute;left:1429.8px;top:473.4px;width:5.400000000000091px;height:277.9px;box-sizing:border-box;background:#dcdde0;border-radius:3px"></div>
<div style="position:absolute;left:1444px;top:152.5px;width:554.5px;height:997.5px;box-sizing:border-box;background:#fdfdfd;border:1px solid #e5e6e8;border-top-left-radius:3px"></div>
<div style="position:absolute;left:1456.4px;top:165.4px;width:529.0px;height:43.599999999999994px;box-sizing:border-box;background:#fff;border:1px solid #c5c7cc;border-radius:2px"></div>
<svg style="position:absolute;left:1466px;top:176px;" width="24" height="24" viewBox="0 0 24 24"><circle cx="11.3" cy="10" r="7.2" fill="none" stroke="#4f6384" stroke-width="1.9"/><path d="M16.5 15.4 L19.8 18.6" stroke="#4f6384" stroke-width="1.6" stroke-linecap="round"/></svg>
<div style="position:absolute;left:1496.40px;top:177.90px;font:normal 400 19.29px/19.29px 'Liberation Sans';letter-spacing:0.000px;color:#9aa5b8;white-space:pre">Search options</div>
<div style="position:absolute;left:1456.4px;top:221px;width:529.0px;height:43.5px;box-sizing:border-box;background:#fff;border:1px solid #c5c7cc;border-radius:2px"></div>
<div style="position:absolute;left:1460px;top:224.2px;width:261px;height:36.30000000000001px;box-sizing:border-box;background:#ebebec;border-radius:2px"></div>
<div style="position:absolute;left:1579.31px;top:233.79px;font:normal 700 18.37px/18.37px 'Liberation Sans';letter-spacing:0.000px;color:#24324a;white-space:pre">All</div>
<div style="position:absolute;left:1808.68px;top:232.80px;font:normal 400 19.52px/19.52px 'Liberation Sans';letter-spacing:0.000px;color:#4f6384;white-space:pre">Overrides</div>
<div style="position:absolute;left:1444px;top:288.0px;width:556px;height:1.0px;box-sizing:border-box;background:#e5e6e8"></div>
<svg style="position:absolute;left:1459px;top:305.0px;" width="14" height="18" viewBox="0 0 14 18"><path d="M5.9 4.3 L10 8.6 L5.9 13" fill="none" stroke="#4f6384" stroke-width="1.9" stroke-linecap="round" stroke-linejoin="round"/></svg>
<div style="position:absolute;left:1488.83px;top:304.68px;font:normal 700 18.73px/18.73px 'Liberation Sans';letter-spacing:0.000px;color:#24324a;white-space:pre">Panel options</div>
<div style="position:absolute;left:1444px;top:340.75px;width:556px;height:1.0px;box-sizing:border-box;background:#e5e6e8"></div>
<svg style="position:absolute;left:1459px;top:357.75px;" width="14" height="18" viewBox="0 0 14 18"><path d="M5.9 4.3 L10 8.6 L5.9 13" fill="none" stroke="#4f6384" stroke-width="1.9" stroke-linecap="round" stroke-linejoin="round"/></svg>
<div style="position:absolute;left:1490.00px;top:357.43px;font:normal 700 18.73px/18.73px 'Liberation Sans';letter-spacing:0.000px;color:#24324a;white-space:pre">Tooltip</div>
<div style="position:absolute;left:1444px;top:393.5px;width:556px;height:1.0px;box-sizing:border-box;background:#e5e6e8"></div>
<svg style="position:absolute;left:1459px;top:410.5px;" width="14" height="18" viewBox="0 0 14 18"><path d="M5.9 4.3 L10 8.6 L5.9 13" fill="none" stroke="#4f6384" stroke-width="1.9" stroke-linecap="round" stroke-linejoin="round"/></svg>
<div style="position:absolute;left:1488.83px;top:410.18px;font:normal 700 18.73px/18.73px 'Liberation Sans';letter-spacing:0.000px;color:#24324a;white-space:pre">Legend</div>
<div style="position:absolute;left:1444px;top:446.25px;width:556px;height:1.0px;box-sizing:border-box;background:#e5e6e8"></div>
<svg style="position:absolute;left:1459px;top:463.25px;" width="14" height="18" viewBox="0 0 14 18"><path d="M5.9 4.3 L10 8.6 L5.9 13" fill="none" stroke="#4f6384" stroke-width="1.9" stroke-linecap="round" stroke-linejoin="round"/></svg>
<div style="position:absolute;left:1489.41px;top:462.93px;font:normal 700 18.73px/18.73px 'Liberation Sans';letter-spacing:0.000px;color:#24324a;white-space:pre">Graph styles</div>
<div style="position:absolute;left:1444px;top:499.0px;width:556px;height:1.0px;box-sizing:border-box;background:#e5e6e8"></div>
<svg style="position:absolute;left:1459px;top:516.0px;" width="14" height="18" viewBox="0 0 14 18"><path d="M5.9 4.3 L10 8.6 L5.9 13" fill="none" stroke="#4f6384" stroke-width="1.9" stroke-linecap="round" stroke-linejoin="round"/></svg>
<div style="position:absolute;left:1489.71px;top:515.68px;font:normal 700 18.73px/18.73px 'Liberation Sans';letter-spacing:0.000px;color:#24324a;white-space:pre">Axis</div>
<div style="position:absolute;left:1444px;top:551.75px;width:556px;height:1.0px;box-sizing:border-box;background:#e5e6e8"></div>
<svg style="position:absolute;left:1459px;top:568.75px;" width="14" height="18" viewBox="0 0 14 18"><path d="M5.9 4.3 L10 8.6 L5.9 13" fill="none" stroke="#4f6384" stroke-width="1.9" stroke-linecap="round" stroke-linejoin="round"/></svg>
<div style="position:absolute;left:1489.71px;top:568.43px;font:normal 700 18.73px/18.73px 'Liberation Sans';letter-spacing:0.000px;color:#24324a;white-space:pre">Standard options</div>
<div style="position:absolute;left:1444px;top:604.5px;width:556px;height:1.0px;box-sizing:border-box;background:#e5e6e8"></div>
<svg style="position:absolute;left:1459px;top:623px;" width="16" height="14" viewBox="0 0 16 14"><path d="M3.5 5 L8 9.5 L12.5 5" fill="none" stroke="#4f6384" stroke-width="1.8" stroke-linecap="round" stroke-linejoin="round"/></svg>
<div style="position:absolute;left:1490.00px;top:622.13px;font:normal 700 18.32px/18.32px 'Liberation Sans';letter-spacing:-0.000px;color:#24324a;white-space:pre">Thresholds</div>
<div style="position:absolute;left:1489.6px;top:669.2px;width:484.70000000000005px;height:32.0px;box-sizing:border-box;background:#dcdde0;border-radius:2px"></div>
<svg style="position:absolute;left:1667px;top:676px;" width="18" height="18" viewBox="0 0 18 18"><path d="M9.7 2.6 V15.3 M3.5 9 H15.9" fill="none" stroke="#3a3e45" stroke-width="2.3"/></svg>
<div style="position:absolute;left:1691.25px;top:677.35px;font:normal 700 15.83px/15.83px 'Liberation Sans';letter-spacing:0.000px;color:#24282f;white-space:pre">Add threshold</div>
<div style="position:absolute;left:1489.6px;top:713px;width:484.70000000000005px;height:43.60000000000002px;box-sizing:border-box;background:#fff;border:1px solid #c5c7cc;border-radius:2px"></div>
<div style="position:absolute;left:1511.7px;top:724.2px;width:22px;height:22px;border-radius:50%;background:#4fd1e5"></div>
<div style="position:absolute;left:1551.70px;top:725.15px;font:normal 400 19.23px/19.23px 'Liberation Sans';letter-spacing:0.088px;color:#24324a;white-space:pre">40</div>
<svg style="position:absolute;left:1942px;top:724px;" width="22" height="24" viewBox="0 0 22 24"><path d="M2.4 6.5 H18.6" stroke="#4f6384" stroke-width="2.1" stroke-linecap="round"/><path d="M7.5 6.5 V4.6 Q7.5 2.4 9.7 2.4 H12.3 Q14.5 2.4 14.5 4.6 V6.5" fill="none" stroke="#4f6384" stroke-width="1.9"/><path d="M5.4 6.5 V17 Q5.4 19.6 8 19.6 H14.1 Q16.7 19.6 16.7 17 V6.5" fill="none" stroke="#64789a" stroke-width="2.1"/><path d="M8.7 10.2 V16.6 M13.2 10.2 V16.6" stroke="#4f6384" stroke-width="1.9" stroke-linecap="round"/></svg>
<div style="position:absolute;left:1489.6px;top:768.8px;width:484.70000000000005px;height:43.60000000000002px;box-sizing:border-box;background:#fff;border:1px solid #c5c7cc;border-radius:2px"></div>
<div style="position:absolute;left:1511.7px;top:780.0px;width:22px;height:22px;border-radius:50%;background:#f2b900"></div>
<div style="position:absolute;left:1551.40px;top:780.95px;font:normal 400 19.23px/19.23px 'Liberation Sans';letter-spacing:0.389px;color:#24324a;white-space:pre">30</div>
<svg style="position:absolute;left:1942px;top:779.8px;" width="22" height="24" viewBox="0 0 22 24"><path d="M2.4 6.5 H18.6" stroke="#4f6384" stroke-width="2.1" stroke-linecap="round"/><path d="M7.5 6.5 V4.6 Q7.5 2.4 9.7 2.4 H12.3 Q14.5 2.4 14.5 4.6 V6.5" fill="none" stroke="#4f6384" stroke-width="1.9"/><path d="M5.4 6.5 V17 Q5.4 19.6 8 19.6 H14.1 Q16.7 19.6 16.7 17 V6.5" fill="none" stroke="#64789a" stroke-width="2.1"/><path d="M8.7 10.2 V16.6 M13.2 10.2 V16.6" stroke="#4f6384" stroke-width="1.9" stroke-linecap="round"/></svg>
<div style="position:absolute;left:1489.6px;top:825.4px;width:484.70000000000005px;height:43.60000000000002px;box-sizing:border-box;background:#fff;border:1px solid #c5c7cc;border-radius:2px"></div>
<div style="position:absolute;left:1511.7px;top:836.6px;width:22px;height:22px;border-radius:50%;background:#ea0030"></div>
<div style="position:absolute;left:1550.80px;top:837.55px;font:normal 400 19.23px/19.23px 'Liberation Sans';letter-spacing:0.990px;color:#24324a;white-space:pre">10</div>
<svg style="position:absolute;left:1942px;top:836.4px;" width="22" height="24" viewBox="0 0 22 24"><path d="M2.4 6.5 H18.6" stroke="#4f6384" stroke-width="2.1" stroke-linecap="round"/><path d="M7.5 6.5 V4.6 Q7.5 2.4 9.7 2.4 H12.3 Q14.5 2.4 14.5 4.6 V6.5" fill="none" stroke="#4f6384" stroke-width="1.9"/><path d="M5.4 6.5 V17 Q5.4 19.6 8 19.6 H14.1 Q16.7 19.6 16.7 17 V6.5" fill="none" stroke="#64789a" stroke-width="2.1"/><path d="M8.7 10.2 V16.6 M13.2 10.2 V16.6" stroke="#4f6384" stroke-width="1.9" stroke-linecap="round"/></svg>
<div style="position:absolute;left:1489.6px;top:879.8px;width:484.70000000000005px;height:43.80000000000007px;box-sizing:border-box;background:#f3f4f5;border-radius:2px"></div>
<div style="position:absolute;left:1511.7px;top:890.8px;width:22px;height:22px;border-radius:50%;background:#28a83e"></div>
<div style="position:absolute;left:1550.50px;top:892.15px;font:normal 400 19.23px/19.23px 'Liberation Sans';letter-spacing:0.649px;color:#9aa5b8;white-space:pre">Base</div>
<div style="position:absolute;left:1489.50px;top:949.06px;font:normal 700 15.93px/15.93px 'Liberation Sans';letter-spacing:0.000px;color:#24324a;white-space:pre">Thresholds mode</div>
<div style="position:absolute;left:1488.17px;top:971.49px;font:normal 400 17.07px/17.07px 'Liberation Sans';letter-spacing:0.000px;color:#4a6590;white-space:pre">Percentage means thresholds relative to min & max</div>
<div style="position:absolute;left:1489.5px;top:997.3px;width:275.79999999999995px;height:43.5px;box-sizing:border-box;background:#fff;border:1px solid #c5c7cc;border-radius:2px"></div>
<div style="position:absolute;left:1493.9px;top:1001.7px;width:123.09999999999991px;height:34.700000000000045px;box-sizing:border-box;background:#ebebec;border-radius:2px"></div>
<div style="position:absolute;left:1516.21px;top:1010.31px;font:normal 700 18.46px/18.46px 'Liberation Sans';letter-spacing:0.000px;color:#24324a;white-space:pre">Absolute</div>
<div style="position:absolute;left:1638.45px;top:1009.12px;font:normal 400 19.86px/19.86px 'Liberation Sans';letter-spacing:0.000px;color:#4f6384;white-space:pre">Percentage</div>
<div style="position:absolute;left:1489.25px;top:1065.86px;font:normal 700 15.81px/15.81px 'Liberation Sans';letter-spacing:0.000px;color:#24324a;white-space:pre">Show thresholds</div>
<div style="position:absolute;left:1489.5px;top:1090.3px;width:484.5px;height:43.200000000000045px;box-sizing:border-box;background:#fff;border:1px solid #c5c7cc;border-radius:2px"></div>
<div style="position:absolute;left:1501.54px;top:1101.12px;font:normal 400 20.44px/20.44px 'Liberation Sans';letter-spacing:0.049px;color:#24324a;white-space:pre">Off</div>
<svg style="position:absolute;left:1943px;top:1104px;" width="16" height="16" viewBox="0 0 16 16"><path d="M4 6 L8 10 L12 6" fill="none" stroke="#4f6384" stroke-width="1.8" stroke-linecap="round" stroke-linejoin="round"/></svg>
<div style="position:absolute;left:0px;top:1138.5px;width:1999px;height:1.5px;box-sizing:border-box;background:#f6f6f6"></div>
<div style="position:absolute;left:0px;top:1140px;width:1999px;height:1px;box-sizing:border-box;background:#fff"></div>
<div style="position:absolute;left:0px;top:1141px;width:1999px;height:1px;box-sizing:border-box;background:#000"></div>
</body></html>
